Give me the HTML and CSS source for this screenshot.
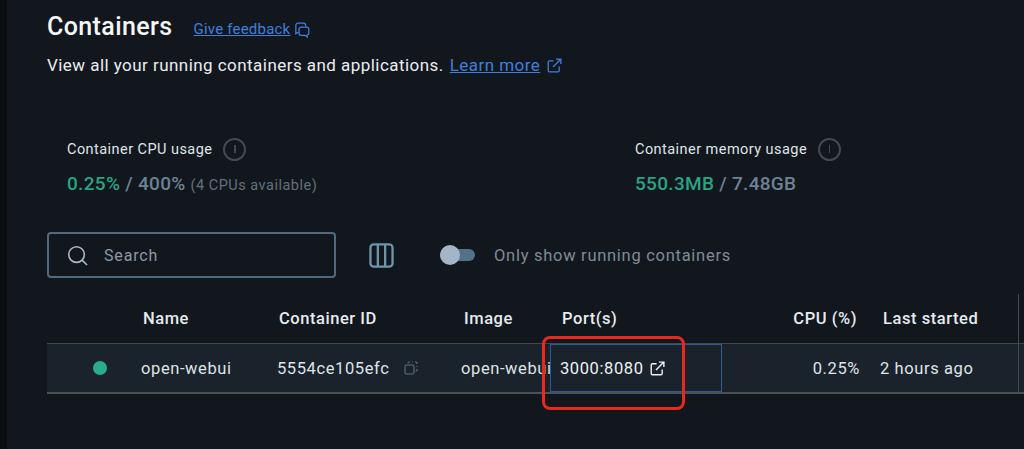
FILE: index.html
```html
<!DOCTYPE html>
<html lang="en">
<head>
    <meta charset="UTF-8">
    <meta name="viewport" content="width=device-width, initial-scale=1.0">
    <title>Containers</title>
    <link rel="stylesheet" href="styles.css">
</head>
<body>
    <div class="side-edge"></div>
    <main>
        <div class="title-row">
            <h1>Containers</h1>
            <a class="feedback" href="#">Give feedback</a>
            <svg class="feedback-icon" viewBox="0 0 14 14" fill="none" stroke="currentColor" stroke-width="1.1">
                <path d="M4 9.2H3L1.6 10.2V3A2 2 0 0 1 3.6 1H8.4A2 2 0 0 1 10.2 3V4"/>
                <path d="M6.4 4.4H11A2 2 0 0 1 13 6.4V9.6A2 2 0 0 1 11.4 11.6L11.6 13.2L9.6 11.6H6.4A2 2 0 0 1 4.4 9.6V6.4A2 2 0 0 1 6.4 4.4Z"/>
            </svg>
        </div>
        <p class="subtitle">
            View all your running containers and applications.
            <a href="#">Learn more</a>
            <svg class="ext-icon link" viewBox="0 0 16 16" fill="none" stroke="currentColor" stroke-width="1.4">
                <path d="M7 3H2.6A1.3 1.3 0 0 0 1.3 4.3V13.4A1.3 1.3 0 0 0 2.6 14.7H11.7A1.3 1.3 0 0 0 13 13.4V9"/>
                <path d="M6.4 9.6L14.6 1.4M9.6 1.2H14.8V6.4"/>
            </svg>
        </p>

        <section class="stats">
            <div class="stat stat-cpu">
                <div class="stat-label">
                    Container CPU usage
                    <span class="info"><i></i></span>
                </div>
                <div class="stat-value"><b>0.25%</b> <span>/ 400%</span> <small>(4 CPUs available)</small></div>
            </div>
            <div class="stat">
                <div class="stat-label">
                    Container memory usage
                    <span class="info"><i></i></span>
                </div>
                <div class="stat-value"><b>550.3MB</b> <span>/ 7.48GB</span></div>
            </div>
        </section>

        <section class="toolbar">
            <div class="search">
                <svg viewBox="0 0 22 22" fill="none" stroke="currentColor" stroke-width="1.7">
                    <circle cx="10" cy="10" r="8.2"/>
                    <path d="M15.8 15.8L21 21"/>
                </svg>
                <span>Search</span>
            </div>
            <svg class="columns-icon" viewBox="0 0 26 26" fill="none" stroke="currentColor" stroke-width="2.4">
                <rect x="1.5" y="1.5" width="23" height="23" rx="3.5"/>
                <path d="M9.2 1.5V24.5M16.8 1.5V24.5"/>
            </svg>
            <div class="toggle"><span></span></div>
            <span class="toggle-label">Only show running containers</span>
        </section>

        <section class="table">
            <div class="row head">
                <div></div>
                <div>Name</div>
                <div>Container ID</div>
                <div class="image-head">Image</div>
                <div class="port-head">Port(s)</div>
                <div class="num">CPU (%)</div>
                <div class="last">Last started</div>
            </div>
            <div class="row body">
                <div class="dot-cell"><span class="dot"></span></div>
                <div>open-webui</div>
                <div class="id-cell">
                    5554ce105efc
                    <svg class="copy" viewBox="0 0 14 14" fill="none" stroke="currentColor" stroke-width="1.1">
                        <rect x="1" y="4" width="9" height="9" rx="1.6"/>
                        <path d="M4 2.6V2A1 1 0 0 1 5 1H6M8 1H9M11 1H12A1 1 0 0 1 13 2V3M13 5V6M13 8V9A1 1 0 0 1 12 10H11.6" />
                    </svg>
                </div>
                <div class="clip">open-webui</div>
                <div class="port-cell">
                    3000:8080
                    <svg class="ext-icon" viewBox="0 0 16 16" fill="none" stroke="currentColor" stroke-width="1.5">
                        <path d="M7 3H2.6A1.3 1.3 0 0 0 1.3 4.3V13.4A1.3 1.3 0 0 0 2.6 14.7H11.7A1.3 1.3 0 0 0 13 13.4V9"/>
                        <path d="M6.4 9.6L14.6 1.4M9.6 1.2H14.8V6.4"/>
                    </svg>
                </div>
                <div class="num">0.25%</div>
                <div class="last">2 hours ago</div>
            </div>
            <div class="resize-line"></div>
            <div class="highlight"></div>
        </section>
    </main>
</body>
</html>
```

FILE: styles.css
```css
html, body {
    height: 100%;
}
body {
    margin: 0;
    display: flex;
    overflow: hidden;
    background-color: #12171e;
    color: #e9edf0;
    font-family: Roboto, "Liberation Sans", sans-serif;
}
.side-edge {
    width: 7px;
    flex-shrink: 0;
    background-color: #0b0e11;
}
main {
    flex: 1;
    padding: 10px 0 0 40px;
}
a {
    color: #3f7fdc;
}
.title-row {
    display: flex;
    align-items: center;
    height: 32px;
}
h1 {
    margin: 0;
    font-size: 25px;
    font-weight: 500;
    letter-spacing: 0.4px;
    color: #f4f6f8;
}
.feedback {
    margin-left: 21px;
    margin-top: 5px;
    font-size: 15px;
    letter-spacing: 0.2px;
}
.feedback-icon {
    width: 16px;
    height: 16px;
    margin: 7px 0 0 4px;
    color: #3f7fdc;
}
.subtitle {
    margin: 13px 0 0;
    font-size: 17px;
    line-height: 20px;
    letter-spacing: 0.45px;
    display: flex;
    align-items: center;
    gap: 6px;
}
.ext-icon {
    width: 15px;
    height: 15px;
}
.link {
    color: #3f7fdc;
    margin-left: 1px;
}
.stats {
    display: flex;
    margin: 62px 0 0 20px;
}
.stat-cpu {
    width: 568px;
}
.stat-label {
    display: flex;
    align-items: center;
    gap: 11px;
    height: 24px;
    font-size: 14.5px;
    letter-spacing: 0.45px;
    color: #dfe4e8;
}
.info {
    box-sizing: border-box;
    width: 23px;
    height: 23px;
    border: 2px solid #44494e;
    border-radius: 50%;
    display: flex;
    justify-content: center;
    align-items: center;
}
.info i {
    width: 1.5px;
    height: 8px;
    background-color: #44494e;
}
.stat-value {
    margin-top: 12px;
    font-size: 19px;
    font-weight: 500;
    letter-spacing: 0.3px;
    line-height: 22px;
    white-space: nowrap;
}
.stat-value b {
    font-weight: 500;
    color: #2aa385;
}
.stat-value span {
    color: #6d8296;
}
.stat-value small {
    font-size: 14.5px;
    font-weight: 400;
    letter-spacing: 0.5px;
    color: #62707d;
}
.toolbar {
    display: flex;
    align-items: center;
    margin-top: 35px;
}
.search {
    box-sizing: border-box;
    width: 289px;
    height: 46px;
    border: 2px solid #4e6a82;
    border-radius: 4px;
    display: flex;
    align-items: center;
    padding-left: 18px;
    gap: 16px;
    font-size: 16px;
    letter-spacing: 0.85px;
    color: #8c99a5;
}
.search svg {
    width: 21px;
    height: 21px;
    color: #a9b8c4;
}
.columns-icon {
    width: 25px;
    height: 25px;
    margin-left: 33px;
    color: #6f94ad;
}
.toggle {
    position: relative;
    width: 35px;
    height: 12px;
    margin-left: 46px;
    border-radius: 6px;
    background-color: #54718a;
}
.toggle span {
    position: absolute;
    left: 0;
    top: -4px;
    width: 20px;
    height: 20px;
    border-radius: 50%;
    background-color: #a3b5c6;
}
.toggle-label {
    margin-left: 19px;
    font-size: 16.5px;
    letter-spacing: 0.72px;
    color: #7f8b96;
}
.table {
    position: relative;
    margin-top: 22px;
}
.row {
    display: grid;
    grid-template-columns: 94px 136px 184px 89px 172px 135px 1fr;
    align-items: center;
}
.head {
    height: 43px;
    box-sizing: border-box;
    padding-bottom: 6px;
    font-size: 16.5px;
    font-weight: 500;
    letter-spacing: 0.55px;
    color: #e6ebef;
}
.head > div {
    padding-left: 2px;
}
.head > .image-head {
    padding-left: 3px;
}
.head > .port-head {
    padding-left: 12px;
}
.head > .num {
    padding: 0;
}
.head > .last {
    padding-left: 26px;
}
.body {
    box-sizing: border-box;
    height: 51px;
    border-top: 1px solid #43484d;
    border-bottom: 2px solid #4a5258;
    background-color: #1a232b;
    font-size: 16.5px;
    letter-spacing: 0.6px;
    color: #dfe4e8;
}
.dot-cell {
    padding-left: 46px;
    display: flex;
}
.dot {
    width: 14px;
    height: 14px;
    border-radius: 50%;
    background-color: #2aab8b;
}
.id-cell {
    display: flex;
    align-items: center;
    gap: 15px;
}
.copy {
    width: 14px;
    height: 14px;
    color: #5e6f7d;
}
.clip {
    overflow: hidden;
    white-space: nowrap;
}
.port-cell {
    box-sizing: border-box;
    height: 48px;
    padding-left: 9px;
    border: 1px solid #2b5a94;
    display: flex;
    align-items: center;
    gap: 6px;
    color: #eef1f3;
}
.num {
    text-align: right;
}
.body > .num {
    margin-right: -3px;
}
.last {
    padding-left: 23px;
}
.resize-line {
    position: absolute;
    right: 5px;
    top: -6px;
    bottom: 2px;
    width: 1px;
    background-color: #43484d;
}
.highlight {
    position: absolute;
    left: 495px;
    top: 36px;
    box-sizing: border-box;
    width: 143px;
    height: 74px;
    border: 3px solid #e8291c;
    border-radius: 8px;
}
```
